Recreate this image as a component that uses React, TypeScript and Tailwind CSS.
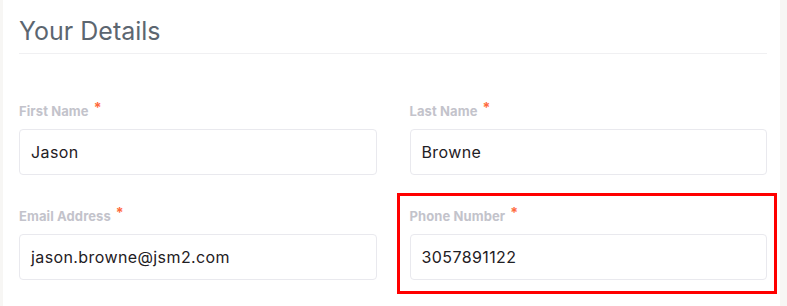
import React from "react";

const font = { fontFamily: "Inter, 'Open Sans', sans-serif" };

function Field({ label, value }: { label: string; value: string }) {
  return (
    <div className="flex flex-col">
      <div className="flex items-start h-[20px] text-[13px] font-bold text-[#c3c3cb] leading-[20px] tracking-[0.1px]">
        <span>{label}</span>
        <span className="ml-[5px] text-[#ff6a3d] text-[14px] leading-[14px]">*</span>
      </div>
      <div className="mt-[8px] h-[46px] border border-[#e9e9ee] rounded-[4px] flex items-center px-[11px] text-[16px] tracking-[0.4px] text-[#1f2024]">
        {value}
      </div>
    </div>
  );
}

export default function App() {
  return (
    <div className="bg-[#f7f6f4] h-[306px] pl-[3px] pr-[7px]" style={font}>
      <div className="bg-white h-full pl-[16px] pr-[13px] relative">
        <h2 className="text-[25px] leading-[30px] pt-[16px] text-[#5c6670] font-normal">Your Details</h2>
        <div className="mt-[7px] border-b border-[#f0f0f2]" />
        <div className="grid grid-cols-2 gap-x-[33px] gap-y-[31px] mt-[47px]">
          <Field label="First Name" value="Jason" />
          <Field label="Last Name" value="Browne" />
          <Field label="Email Address" value="jason.browne@jsm2.com" />
          <Field label="Phone Number" value="3057891122" />
        </div>
        <div className="absolute left-[394px] top-[193px] w-[380px] h-[101px] border-[3px] border-[#ff0000] pointer-events-none" />
      </div>
    </div>
  );
}
